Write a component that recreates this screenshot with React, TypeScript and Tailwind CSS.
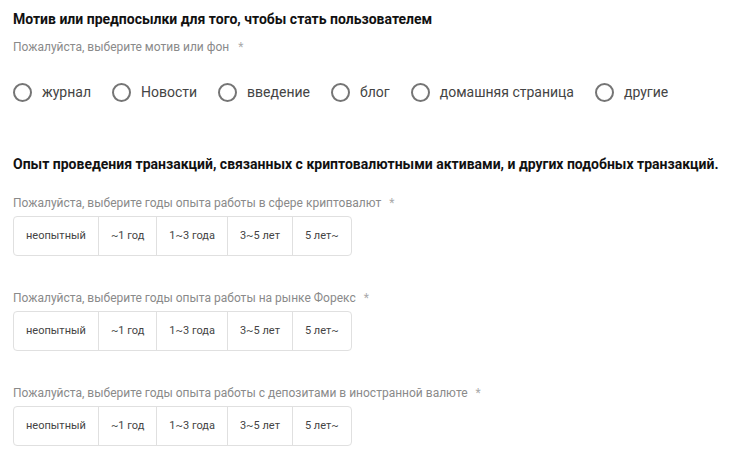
const motives = ["журнал", "Новости", "введение", "блог", "домашняя страница", "другие"];
const years = ["неопытный", "~1 год", "1~3 года", "3~5 лет", "5 лет~"];

const Radio = ({ label }: { label: string }) => (
  <label className="flex items-center gap-[10px]">
    <span className="h-[19px] w-[19px] rounded-full border-2 border-[#757575]" />
    <span className="text-[14px] text-[#444]">{label}</span>
  </label>
);

const YearPicker = ({ label }: { label: string }) => (
  <div>
    <p className="text-[12px] leading-[16px] text-[#8a8a8a]">
      {label}
      <span className="ml-[8px] text-[#aaa]">*</span>
    </p>
    <div className="mt-[5px] inline-flex h-[40px] rounded-[4px] border border-[#e0e0e0]">
      {years.map((year, i) => (
        <div
          key={year}
          className={`flex items-center px-[12px] text-[11px] text-[#444] ${i > 0 ? "border-l border-[#e0e0e0]" : ""}`}
        >
          {year}
        </div>
      ))}
    </div>
  </div>
);

export default function App() {
  return (
    <div className="min-h-[456px] bg-white px-[13px] pt-[10px] font-['Roboto',sans-serif]">
      <h2 className="whitespace-nowrap text-[14px] font-bold leading-[18px] text-[#111]">
        Мотив или предпосылки для того, чтобы стать пользователем
      </h2>
      <p className="mt-[11px] text-[12px] leading-[16px] text-[#8a8a8a]">
        Пожалуйста, выберите мотив или фон
        <span className="ml-[9px] text-[#aaa]">*</span>
      </p>
      <div className="mt-[27px] flex items-center gap-[21px]">
        {motives.map((m) => (
          <Radio key={m} label={m} />
        ))}
      </div>

      <h2 className="mt-[52px] whitespace-nowrap text-[14px] font-bold leading-[18px] text-[#111]">
        Опыт проведения транзакций, связанных с криптовалютными активами, и других подобных транзакций.
      </h2>
      <div className="mt-[22px] flex flex-col gap-[34px]">
        <YearPicker label="Пожалуйста, выберите годы опыта работы в сфере криптовалют" />
        <YearPicker label="Пожалуйста, выберите годы опыта работы на рынке Форекс" />
        <YearPicker label="Пожалуйста, выберите годы опыта работы с депозитами в иностранной валюте" />
      </div>
    </div>
  );
}
